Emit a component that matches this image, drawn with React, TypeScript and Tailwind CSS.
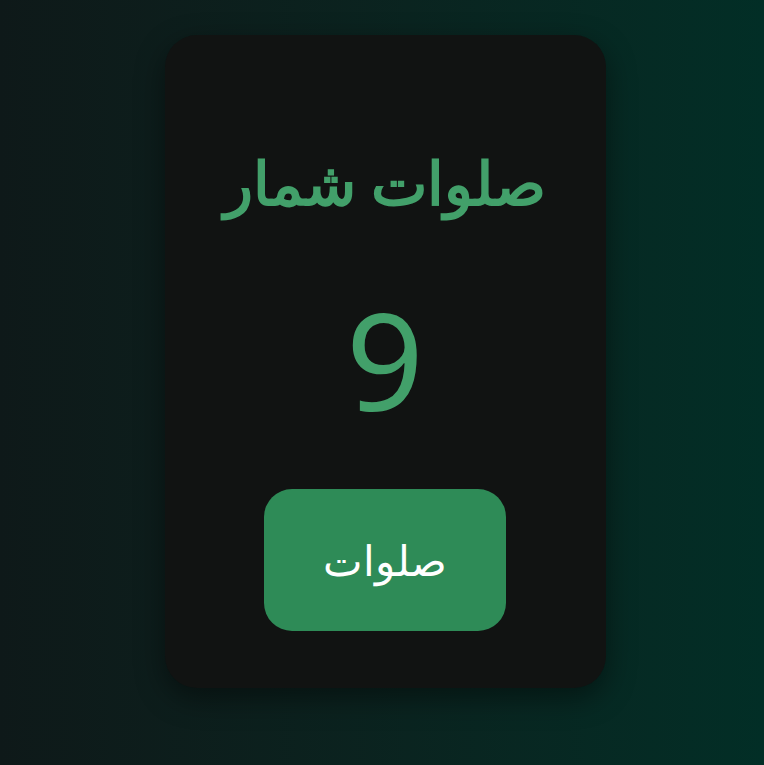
import React, { useState } from "react";

export default function App() {
  const [count, setCount] = useState(9);
  return (
    <div
      dir="rtl"
      className="min-h-screen w-full bg-gradient-to-r from-[#0e1919] to-[#022e26] flex justify-center pt-[35px] pl-[6px]"
      style={{ fontFamily: '"Noto Sans", sans-serif' }}
    >
      <div className="w-[441px] h-[653px] rounded-[32px] bg-[#111312] shadow-[0_10px_30px_rgba(0,0,0,0.45)] flex flex-col items-center">
        <h1 className="mt-[117px] text-[60px] leading-none font-bold text-[#42a06a]">صلوات شمار</h1>
        <div className="mt-[79px] text-[136px] leading-none text-[#42a06a]">{count}</div>
        <button
          onClick={() => setCount(count + 1)}
          className="mt-[62px] w-[242px] h-[142px] rounded-[28px] bg-[#2e8b57] text-white text-[42px] leading-none"
        >
          صلوات
        </button>
      </div>
    </div>
  );
}
